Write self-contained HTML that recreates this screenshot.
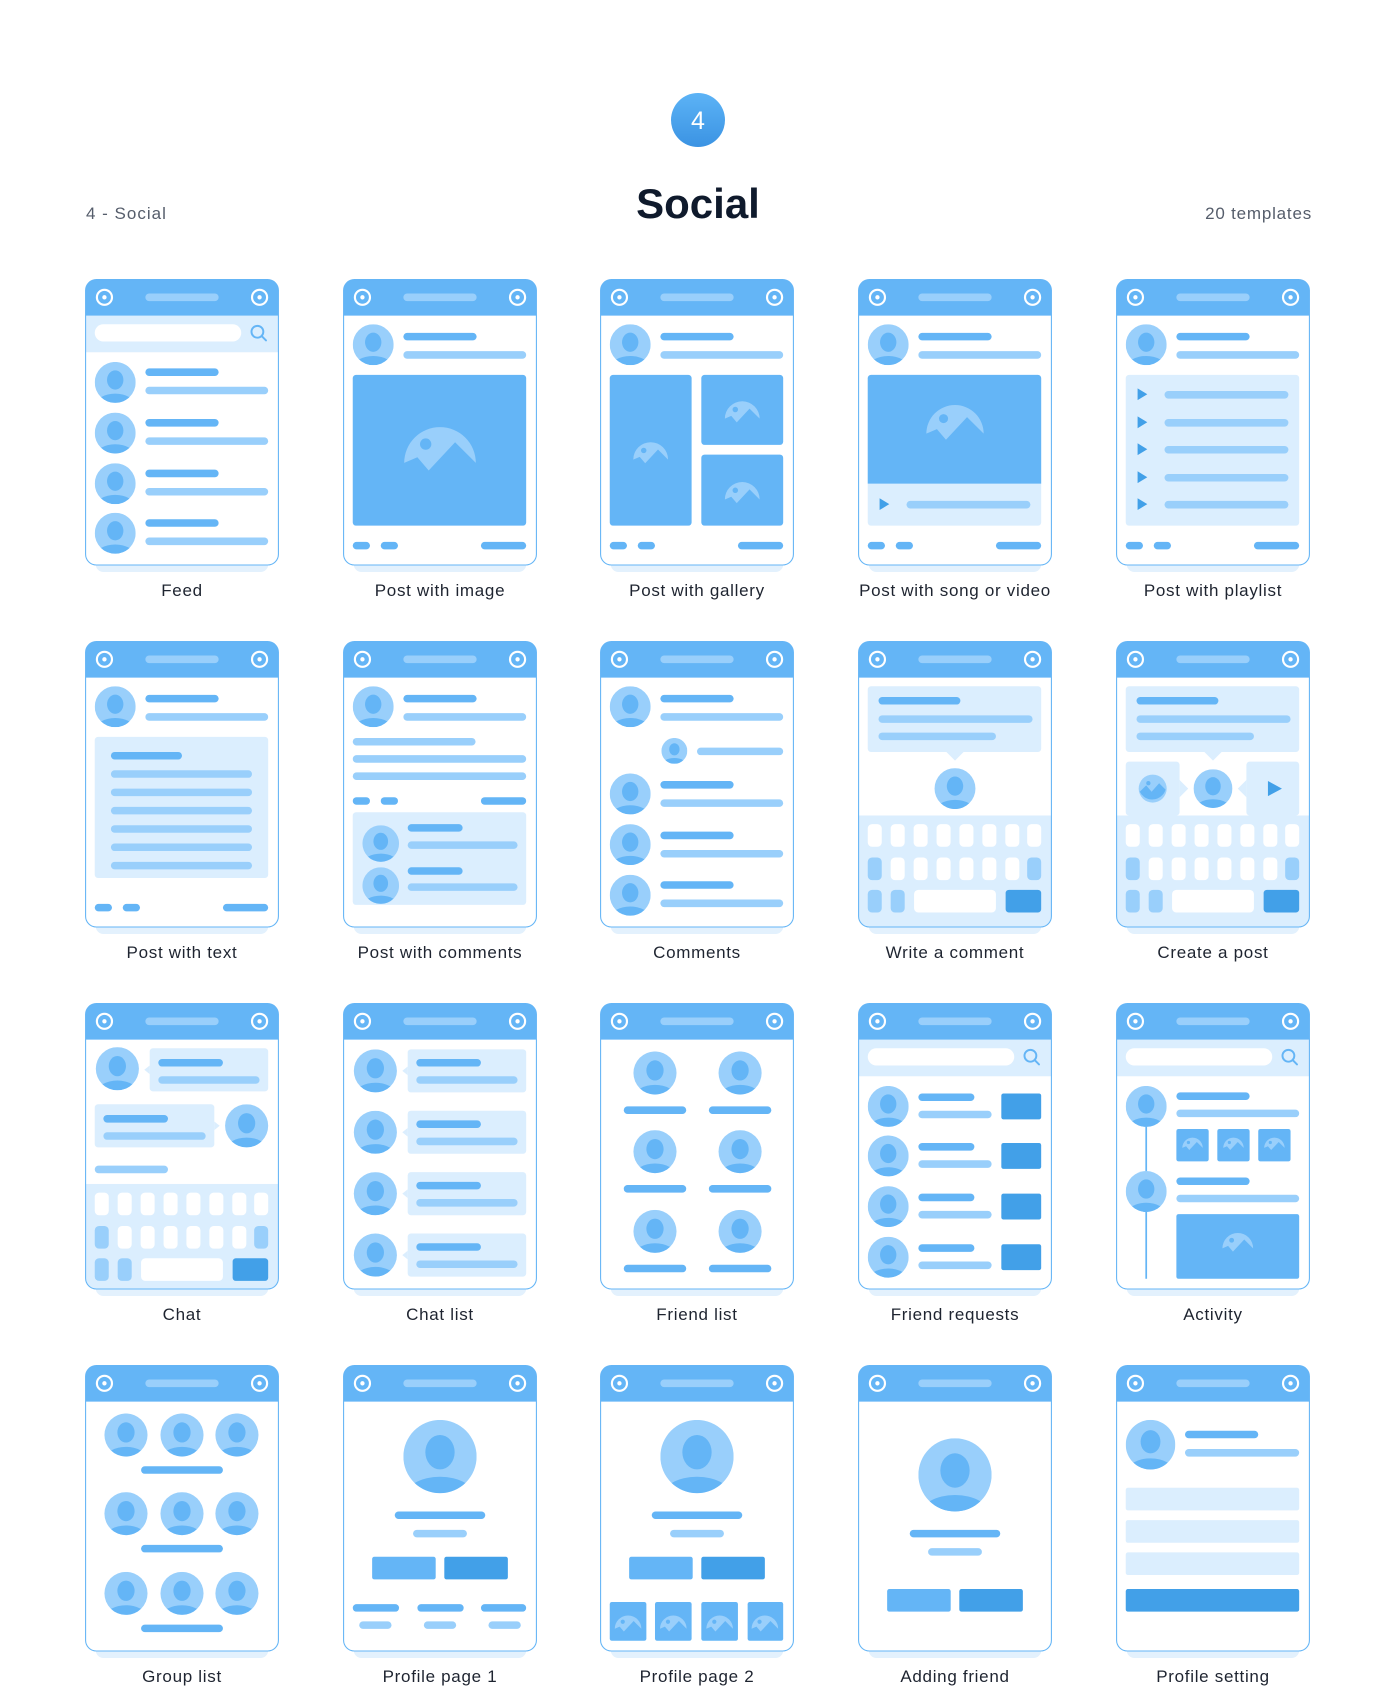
<!DOCTYPE html>
<html><head><meta charset="utf-8">
<style>
body{margin:0;background:#fff;width:1400px;height:1691px;position:relative;overflow:hidden;font-family:"Liberation Sans",sans-serif}
.c{position:absolute;width:194px;height:293px}
.l{position:absolute;width:258px;text-align:center;font-size:17px;color:#1e2430;line-height:20px;letter-spacing:0.7px}
</style></head><body>
<svg width="0" height="0" style="position:absolute">
<defs>
<clipPath id="avc"><circle cx="0" cy="0" r="1"/></clipPath>
<symbol id="av" viewBox="-1 -1 2 2"><circle r="1" fill="#99cffb"/><g clip-path="url(#avc)"><ellipse cx="0" cy="-0.12" rx="0.4" ry="0.47" fill="#64b5f6"/><ellipse cx="0" cy="1.1" rx="0.95" ry="0.55" fill="#64b5f6"/></g></symbol>
<symbol id="img" viewBox="-1 -1 2 2"><path d="M-0.95,0.45 A0.95,0.95 0 1 1 0.95,0.45 L0.4,-0.1 L-0.3,0.65 L-0.6,0.3 Z" fill="#99cffb"/><circle cx="-0.38" cy="-0.05" r="0.15" fill="#64b5f6"/></symbol>
<clipPath id="cc"><rect x="0.5" y="0.5" width="179" height="265" rx="10"/></clipPath>
<g id="base"><rect x="10" y="258" width="160" height="14" rx="7" fill="#e3f1fd"/><rect x="0.5" y="0.5" width="179" height="265" rx="10" fill="#fff"/></g>
<g id="top"><path d="M0.5,34 V10.5 A10,10 0 0 1 10.5,0.5 H169.5 A10,10 0 0 1 179.5,10.5 V34 Z" fill="#64b5f6"/>
<circle cx="18" cy="17" r="7" fill="none" stroke="#fff" stroke-width="2"/><circle cx="18" cy="17" r="2" fill="#fff"/>
<circle cx="162" cy="17" r="7" fill="none" stroke="#fff" stroke-width="2"/><circle cx="162" cy="17" r="2" fill="#fff"/>
<rect x="56" y="13.5" width="68" height="7" rx="3.5" fill="#99cffb"/>
<rect x="0.5" y="0.5" width="179" height="265" rx="10" fill="none" stroke="#64b5f6" stroke-width="1"/></g>
<g id="srch"><rect x="0" y="34" width="180" height="34" fill="#dbeefe"/><rect x="9" y="42" width="136" height="16" rx="8" fill="#fff"/><circle cx="160" cy="49" r="5.5" fill="none" stroke="#64b5f6" stroke-width="1.8"/><path d="M164,53 L168,57" stroke="#64b5f6" stroke-width="1.8" stroke-linecap="round"/></g>
<g id="ph"><use href="#av" x="9" y="42" width="38" height="38"/><rect x="56" y="50" width="68" height="7" rx="3.5" fill="#64b5f6"/><rect x="56" y="67" width="114" height="7" rx="3.5" fill="#99cffb"/></g>
<g id="ft"><rect x="9" y="244" width="16" height="7" rx="3.5" fill="#64b5f6"/><rect x="35" y="244" width="16" height="7" rx="3.5" fill="#64b5f6"/><rect x="128" y="244" width="42" height="7" rx="3.5" fill="#64b5f6"/></g>
<g id="kb"><rect x="0" y="0" width="180" height="110" fill="#dbeefe"/>
<g fill="#fff"><rect x="9" y="8" width="13" height="21" rx="4"/><rect x="30.3" y="8" width="13" height="21" rx="4"/><rect x="51.6" y="8" width="13" height="21" rx="4"/><rect x="72.9" y="8" width="13" height="21" rx="4"/><rect x="94.1" y="8" width="13" height="21" rx="4"/><rect x="115.4" y="8" width="13" height="21" rx="4"/><rect x="136.7" y="8" width="13" height="21" rx="4"/><rect x="157" y="8" width="13" height="21" rx="4"/>
<rect x="30.3" y="39" width="13" height="21" rx="4"/><rect x="51.6" y="39" width="13" height="21" rx="4"/><rect x="72.9" y="39" width="13" height="21" rx="4"/><rect x="94.1" y="39" width="13" height="21" rx="4"/><rect x="115.4" y="39" width="13" height="21" rx="4"/><rect x="136.7" y="39" width="13" height="21" rx="4"/>
<rect x="52" y="69" width="76" height="21" rx="4"/></g>
<g fill="#99cffb"><rect x="9" y="39" width="13" height="21" rx="4"/><rect x="157" y="39" width="13" height="21" rx="4"/><rect x="9" y="69" width="13" height="21" rx="4"/><rect x="30.3" y="69" width="13" height="21" rx="4"/></g>
<rect x="137" y="69" width="33" height="21" rx="3" fill="#42a0e8"/></g>
<path id="tri" d="M-4,-5.5 L5,0 L-4,5.5 Z" fill="#42a0e8"/>
</defs></svg>

<svg style="position:absolute;left:671px;top:93px" width="54" height="54"><defs><linearGradient id="bg" x1="0" y1="0" x2="0" y2="1"><stop offset="0" stop-color="#5cb3f6"/><stop offset="1" stop-color="#3b93e3"/></linearGradient></defs><circle cx="27" cy="27" r="27" fill="url(#bg)"/><text x="27" y="36" text-anchor="middle" font-family="Liberation Sans" font-size="25" fill="#fff">4</text></svg>
<div style="position:absolute;left:0;width:1396px;top:178px;text-align:center;font-size:42px;font-weight:bold;color:#0f1a2c;line-height:52px">Social</div>
<div style="position:absolute;left:86px;top:204px;font-size:17px;color:#555d6b;line-height:20px;letter-spacing:1px">4 - Social</div>
<div style="position:absolute;right:88px;top:204px;font-size:17px;color:#555d6b;line-height:20px;letter-spacing:0.8px">20 templates</div>

<!-- Row 1 -->
<svg class="c" style="left:85px;top:279px" viewBox="0 0 180 272"><use href="#base"/><g clip-path="url(#cc)">
<use href="#srch"/>
<use href="#av" x="9" y="77" width="38" height="38"/><rect x="56" y="83" width="68" height="7" rx="3.5" fill="#64b5f6"/><rect x="56" y="100" width="114" height="7" rx="3.5" fill="#99cffb"/>
<use href="#av" x="9" y="124" width="38" height="38"/><rect x="56" y="130" width="68" height="7" rx="3.5" fill="#64b5f6"/><rect x="56" y="147" width="114" height="7" rx="3.5" fill="#99cffb"/>
<use href="#av" x="9" y="171" width="38" height="38"/><rect x="56" y="177" width="68" height="7" rx="3.5" fill="#64b5f6"/><rect x="56" y="194" width="114" height="7" rx="3.5" fill="#99cffb"/>
<use href="#av" x="9" y="217" width="38" height="38"/><rect x="56" y="223" width="68" height="7" rx="3.5" fill="#64b5f6"/><rect x="56" y="240" width="114" height="7" rx="3.5" fill="#99cffb"/>
</g><use href="#top"/></svg>
<div class="l" style="left:53px;top:581px">Feed</div>

<svg class="c" style="left:343px;top:279px" viewBox="0 0 180 272"><use href="#base"/><g clip-path="url(#cc)">
<use href="#ph"/><rect x="9" y="89" width="161" height="140" rx="3" fill="#64b5f6"/><use href="#img" x="55" y="120" width="70" height="70"/><use href="#ft"/>
</g><use href="#top"/></svg>
<div class="l" style="left:311px;top:581px">Post with image</div>

<svg class="c" style="left:600px;top:279px" viewBox="0 0 180 272"><use href="#base"/><g clip-path="url(#cc)">
<use href="#ph"/><rect x="9" y="89" width="76" height="140" rx="3" fill="#64b5f6"/><rect x="94" y="89" width="76" height="65" rx="3" fill="#64b5f6"/><rect x="94" y="163" width="76" height="66" rx="3" fill="#64b5f6"/>
<use href="#img" x="30" y="143" width="34" height="34"/><use href="#img" x="115" y="105" width="34" height="34"/><use href="#img" x="115" y="180" width="34" height="34"/><use href="#ft"/>
</g><use href="#top"/></svg>
<div class="l" style="left:568px;top:581px">Post with gallery</div>

<svg class="c" style="left:858px;top:279px" viewBox="0 0 180 272"><use href="#base"/><g clip-path="url(#cc)">
<use href="#ph"/><rect x="9" y="89" width="161" height="140" rx="3" fill="#dbeefe"/><path d="M12,89 H167 A3,3 0 0 1 170,92 V190 H9 V92 A3,3 0 0 1 12,89Z" fill="#64b5f6"/><use href="#img" x="62" y="103" width="56" height="56"/>
<use href="#tri" x="24" y="209"/><rect x="45" y="206" width="115" height="7" rx="3.5" fill="#99cffb"/><use href="#ft"/>
</g><use href="#top"/></svg>
<div class="l" style="left:826px;top:581px">Post with song or video</div>

<svg class="c" style="left:1116px;top:279px" viewBox="0 0 180 272"><use href="#base"/><g clip-path="url(#cc)">
<use href="#ph"/><rect x="9" y="89" width="161" height="140" rx="3" fill="#dbeefe"/>
<use href="#tri" x="24" y="107"/><rect x="45" y="104" width="115" height="7" rx="3.5" fill="#99cffb"/>
<use href="#tri" x="24" y="133"/><rect x="45" y="130" width="115" height="7" rx="3.5" fill="#99cffb"/>
<use href="#tri" x="24" y="158"/><rect x="45" y="155" width="115" height="7" rx="3.5" fill="#99cffb"/>
<use href="#tri" x="24" y="184"/><rect x="45" y="181" width="115" height="7" rx="3.5" fill="#99cffb"/>
<use href="#tri" x="24" y="209"/><rect x="45" y="206" width="115" height="7" rx="3.5" fill="#99cffb"/><use href="#ft"/>
</g><use href="#top"/></svg>
<div class="l" style="left:1084px;top:581px">Post with playlist</div>

<!-- Row 2 -->
<svg class="c" style="left:85px;top:641px" viewBox="0 0 180 272"><use href="#base"/><g clip-path="url(#cc)">
<use href="#ph"/><rect x="9" y="89" width="161" height="131" rx="3" fill="#dbeefe"/><rect x="24" y="103" width="66" height="7" rx="3.5" fill="#64b5f6"/>
<g fill="#99cffb"><rect x="24" y="120" width="131" height="7" rx="3.5"/><rect x="24" y="137" width="131" height="7" rx="3.5"/><rect x="24" y="154" width="131" height="7" rx="3.5"/><rect x="24" y="171" width="131" height="7" rx="3.5"/><rect x="24" y="188" width="131" height="7" rx="3.5"/><rect x="24" y="205" width="131" height="7" rx="3.5"/></g><use href="#ft"/>
</g><use href="#top"/></svg>
<div class="l" style="left:53px;top:943px">Post with text</div>

<svg class="c" style="left:343px;top:641px" viewBox="0 0 180 272"><use href="#base"/><g clip-path="url(#cc)">
<use href="#ph"/><g fill="#99cffb"><rect x="9" y="90" width="114" height="7" rx="3.5"/><rect x="9" y="106" width="161" height="7" rx="3.5"/><rect x="9" y="122" width="161" height="7" rx="3.5"/></g>
<g fill="#64b5f6"><rect x="9" y="145" width="16" height="7" rx="3.5"/><rect x="35" y="145" width="16" height="7" rx="3.5"/><rect x="128" y="145" width="42" height="7" rx="3.5"/></g>
<rect x="9" y="159" width="161" height="86" rx="3" fill="#dbeefe"/>
<use href="#av" x="18" y="171" width="34" height="34"/><rect x="60" y="170" width="51" height="7" rx="3.5" fill="#64b5f6"/><rect x="60" y="186" width="102" height="7" rx="3.5" fill="#99cffb"/>
<use href="#av" x="18" y="210" width="34" height="34"/><rect x="60" y="210" width="51" height="7" rx="3.5" fill="#64b5f6"/><rect x="60" y="225" width="102" height="7" rx="3.5" fill="#99cffb"/>
</g><use href="#top"/></svg>
<div class="l" style="left:311px;top:943px">Post with comments</div>

<svg class="c" style="left:600px;top:641px" viewBox="0 0 180 272"><use href="#base"/><g clip-path="url(#cc)">
<use href="#ph"/><use href="#av" x="57" y="90" width="24" height="24"/><rect x="90" y="99" width="80" height="7" rx="3.5" fill="#99cffb"/>
<use href="#av" x="9" y="123" width="38" height="38"/><rect x="56" y="130" width="68" height="7" rx="3.5" fill="#64b5f6"/><rect x="56" y="147" width="114" height="7" rx="3.5" fill="#99cffb"/>
<use href="#av" x="9" y="170" width="38" height="38"/><rect x="56" y="177" width="68" height="7" rx="3.5" fill="#64b5f6"/><rect x="56" y="194" width="114" height="7" rx="3.5" fill="#99cffb"/>
<use href="#av" x="9" y="217" width="38" height="38"/><rect x="56" y="223" width="68" height="7" rx="3.5" fill="#64b5f6"/><rect x="56" y="240" width="114" height="7" rx="3.5" fill="#99cffb"/>
</g><use href="#top"/></svg>
<div class="l" style="left:568px;top:943px">Comments</div>

<svg class="c" style="left:858px;top:641px" viewBox="0 0 180 272"><use href="#base"/><g clip-path="url(#cc)">
<rect x="9" y="42" width="161" height="61" rx="3" fill="#dbeefe"/><path d="M82,103 L90,111 L98,103Z" fill="#dbeefe"/>
<rect x="19" y="52" width="76" height="7" rx="3.5" fill="#64b5f6"/><rect x="19" y="69" width="143" height="7" rx="3.5" fill="#99cffb"/><rect x="19" y="85" width="109" height="7" rx="3.5" fill="#99cffb"/>
<use href="#av" x="71" y="118" width="38" height="38"/>
<use href="#kb" y="162"/>
</g><use href="#top"/></svg>
<div class="l" style="left:826px;top:943px">Write a comment</div>

<svg class="c" style="left:1116px;top:641px" viewBox="0 0 180 272"><use href="#base"/><g clip-path="url(#cc)">
<rect x="9" y="42" width="161" height="61" rx="3" fill="#dbeefe"/><path d="M82,103 L90,111 L98,103Z" fill="#dbeefe"/>
<rect x="19" y="52" width="76" height="7" rx="3.5" fill="#64b5f6"/><rect x="19" y="69" width="143" height="7" rx="3.5" fill="#99cffb"/><rect x="19" y="85" width="109" height="7" rx="3.5" fill="#99cffb"/>
<rect x="9" y="112" width="50" height="50" rx="3" fill="#dbeefe"/><path d="M59,129 L67,137 L59,145Z" fill="#dbeefe"/>
<rect x="121" y="112" width="49" height="50" rx="3" fill="#dbeefe"/><path d="M121,129 L113,137 L121,145Z" fill="#dbeefe"/>
<circle cx="34" cy="137" r="13" fill="#99cffb"/><path d="M22,140 L28,134 L33,140 L40,132 L46,138 A13,13 0 0 1 22,140Z" fill="#64b5f6"/><circle cx="30" cy="132" r="2" fill="#64b5f6"/>
<use href="#av" x="72" y="119" width="36" height="36"/>
<path d="M141,130 L154,137 L141,144Z" fill="#42a0e8"/>
<use href="#kb" y="162"/>
</g><use href="#top"/></svg>
<div class="l" style="left:1084px;top:943px">Create a post</div>

<!-- Row 3 -->
<svg class="c" style="left:85px;top:1003px" viewBox="0 0 180 272"><use href="#base"/><g clip-path="url(#cc)">
<use href="#av" x="9" y="41" width="42" height="40"/><rect x="60" y="42" width="110" height="40" rx="3" fill="#dbeefe"/><path d="M60,58 L55,62 L60,66Z" fill="#dbeefe"/>
<rect x="68" y="52" width="60" height="7" rx="3.5" fill="#64b5f6"/><rect x="68" y="68" width="94" height="7" rx="3.5" fill="#99cffb"/>
<rect x="9" y="94" width="111" height="40" rx="3" fill="#dbeefe"/><path d="M120,110 L125,114 L120,118Z" fill="#dbeefe"/>
<rect x="17" y="104" width="60" height="7" rx="3.5" fill="#64b5f6"/><rect x="17" y="120" width="95" height="7" rx="3.5" fill="#99cffb"/>
<use href="#av" x="129" y="94" width="42" height="40"/>
<rect x="9" y="151" width="68" height="7" rx="3.5" fill="#99cffb"/>
<use href="#kb" y="168"/>
</g><use href="#top"/></svg>
<div class="l" style="left:53px;top:1305px">Chat</div>

<svg class="c" style="left:343px;top:1003px" viewBox="0 0 180 272"><use href="#base"/><g clip-path="url(#cc)">
<g id="cl1"><use href="#av" x="9" y="43" width="42" height="40"/><rect x="60" y="43" width="110" height="40" rx="3" fill="#dbeefe"/><path d="M60,59 L55,63 L60,67Z" fill="#dbeefe"/><rect x="68" y="52" width="60" height="7" rx="3.5" fill="#64b5f6"/><rect x="68" y="68" width="94" height="7" rx="3.5" fill="#99cffb"/></g>
<use href="#cl1" y="57"/><use href="#cl1" y="114"/><use href="#cl1" y="171"/>
</g><use href="#top"/></svg>
<div class="l" style="left:311px;top:1305px">Chat list</div>

<svg class="c" style="left:600px;top:1003px" viewBox="0 0 180 272"><use href="#base"/><g clip-path="url(#cc)">
<g id="fr1"><use href="#av" x="30" y="45" width="42" height="40"/><rect x="22" y="96" width="58" height="7" rx="3.5" fill="#64b5f6"/><use href="#av" x="109" y="45" width="42" height="40"/><rect x="101" y="96" width="58" height="7" rx="3.5" fill="#64b5f6"/></g>
<use href="#fr1" y="73"/><use href="#fr1" y="147"/>
</g><use href="#top"/></svg>
<div class="l" style="left:568px;top:1305px">Friend list</div>

<svg class="c" style="left:858px;top:1003px" viewBox="0 0 180 272"><use href="#base"/><g clip-path="url(#cc)">
<use href="#srch"/>
<g id="rq"><use href="#av" x="9" y="77" width="38" height="38"/><rect x="56" y="84" width="52" height="7" rx="3.5" fill="#64b5f6"/><rect x="56" y="100" width="68" height="7" rx="3.5" fill="#99cffb"/><rect x="133" y="84" width="37" height="24" rx="2" fill="#42a0e8"/></g>
<use href="#rq" y="46"/><use href="#rq" y="93"/><use href="#rq" y="140"/>
</g><use href="#top"/></svg>
<div class="l" style="left:826px;top:1305px">Friend requests</div>

<svg class="c" style="left:1116px;top:1003px" viewBox="0 0 180 272"><use href="#base"/><g clip-path="url(#cc)">
<use href="#srch"/>
<rect x="27.2" y="110" width="1.6" height="146" fill="#64b5f6"/>
<use href="#av" x="9" y="77" width="38" height="38"/><rect x="56" y="83" width="68" height="7" rx="3.5" fill="#64b5f6"/><rect x="56" y="99" width="114" height="7" rx="3.5" fill="#99cffb"/>
<rect x="56" y="117" width="30" height="30" rx="2" fill="#64b5f6"/><rect x="94" y="117" width="30" height="30" rx="2" fill="#64b5f6"/><rect x="132" y="117" width="30" height="30" rx="2" fill="#64b5f6"/>
<use href="#img" x="61" y="120" width="20" height="20"/><use href="#img" x="99" y="120" width="20" height="20"/><use href="#img" x="137" y="120" width="20" height="20"/>
<use href="#av" x="9" y="156" width="38" height="38"/><rect x="56" y="162" width="68" height="7" rx="3.5" fill="#64b5f6"/><rect x="56" y="178" width="114" height="7" rx="3.5" fill="#99cffb"/>
<rect x="56" y="196" width="114" height="60" rx="2" fill="#64b5f6"/><use href="#img" x="98" y="206" width="30" height="30"/>
</g><use href="#top"/></svg>
<div class="l" style="left:1084px;top:1305px">Activity</div>

<!-- Row 4 -->
<svg class="c" style="left:85px;top:1365px" viewBox="0 0 180 272"><use href="#base"/><g clip-path="url(#cc)">
<g id="gr"><use href="#av" x="17" y="45" width="42" height="40"/><use href="#av" x="69" y="45" width="42" height="40"/><use href="#av" x="120" y="45" width="42" height="40"/><rect x="52" y="94" width="76" height="7" rx="3.5" fill="#64b5f6"/></g>
<use href="#gr" y="73"/><use href="#gr" y="147"/>
</g><use href="#top"/></svg>
<div class="l" style="left:53px;top:1667px">Group list</div>

<svg class="c" style="left:343px;top:1365px" viewBox="0 0 180 272"><use href="#base"/><g clip-path="url(#cc)">
<use href="#av" x="56" y="51" width="68" height="68"/><rect x="48" y="136" width="84" height="7" rx="3.5" fill="#64b5f6"/><rect x="65" y="153" width="50" height="7" rx="3.5" fill="#99cffb"/>
<rect x="27" y="178" width="59" height="21" rx="2" fill="#64b5f6"/><rect x="94" y="178" width="59" height="21" rx="2" fill="#42a0e8"/>
<g fill="#64b5f6"><rect x="9" y="222" width="43" height="7" rx="3.5"/><rect x="69" y="222" width="43" height="7" rx="3.5"/><rect x="128" y="222" width="42" height="7" rx="3.5"/></g>
<g fill="#99cffb"><rect x="15" y="238" width="30" height="7" rx="3.5"/><rect x="75" y="238" width="30" height="7" rx="3.5"/><rect x="135" y="238" width="30" height="7" rx="3.5"/></g>
</g><use href="#top"/></svg>
<div class="l" style="left:311px;top:1667px">Profile page 1</div>

<svg class="c" style="left:600px;top:1365px" viewBox="0 0 180 272"><use href="#base"/><g clip-path="url(#cc)">
<use href="#av" x="56" y="51" width="68" height="68"/><rect x="48" y="136" width="84" height="7" rx="3.5" fill="#64b5f6"/><rect x="65" y="153" width="50" height="7" rx="3.5" fill="#99cffb"/>
<rect x="27" y="178" width="59" height="21" rx="2" fill="#64b5f6"/><rect x="94" y="178" width="59" height="21" rx="2" fill="#42a0e8"/>
<g fill="#64b5f6"><rect x="9" y="220" width="34" height="36" rx="2"/><rect x="51" y="220" width="34" height="36" rx="2"/><rect x="94" y="220" width="34" height="36" rx="2"/><rect x="137" y="220" width="33" height="36" rx="2"/></g>
<use href="#img" x="13" y="226" width="26" height="26"/><use href="#img" x="55" y="226" width="26" height="26"/><use href="#img" x="98" y="226" width="26" height="26"/><use href="#img" x="140" y="226" width="26" height="26"/>
</g><use href="#top"/></svg>
<div class="l" style="left:568px;top:1667px">Profile page 2</div>

<svg class="c" style="left:858px;top:1365px" viewBox="0 0 180 272"><use href="#base"/><g clip-path="url(#cc)">
<use href="#av" x="56" y="68" width="68" height="68"/><rect x="48" y="153" width="84" height="7" rx="3.5" fill="#64b5f6"/><rect x="65" y="170" width="50" height="7" rx="3.5" fill="#99cffb"/>
<rect x="27" y="208" width="59" height="21" rx="2" fill="#64b5f6"/><rect x="94" y="208" width="59" height="21" rx="2" fill="#42a0e8"/>
</g><use href="#top"/></svg>
<div class="l" style="left:826px;top:1667px">Adding friend</div>

<svg class="c" style="left:1116px;top:1365px" viewBox="0 0 180 272"><use href="#base"/><g clip-path="url(#cc)">
<use href="#av" x="9" y="51" width="46" height="46"/><rect x="64" y="61" width="68" height="7" rx="3.5" fill="#64b5f6"/><rect x="64" y="78" width="106" height="7" rx="3.5" fill="#99cffb"/>
<rect x="9" y="114" width="161" height="21" rx="2" fill="#dbeefe"/><rect x="9" y="144" width="161" height="21" rx="2" fill="#dbeefe"/><rect x="9" y="174" width="161" height="21" rx="2" fill="#dbeefe"/>
<rect x="9" y="208" width="161" height="21" rx="2" fill="#42a0e8"/>
</g><use href="#top"/></svg>
<div class="l" style="left:1084px;top:1667px">Profile setting</div>
</body></html>
